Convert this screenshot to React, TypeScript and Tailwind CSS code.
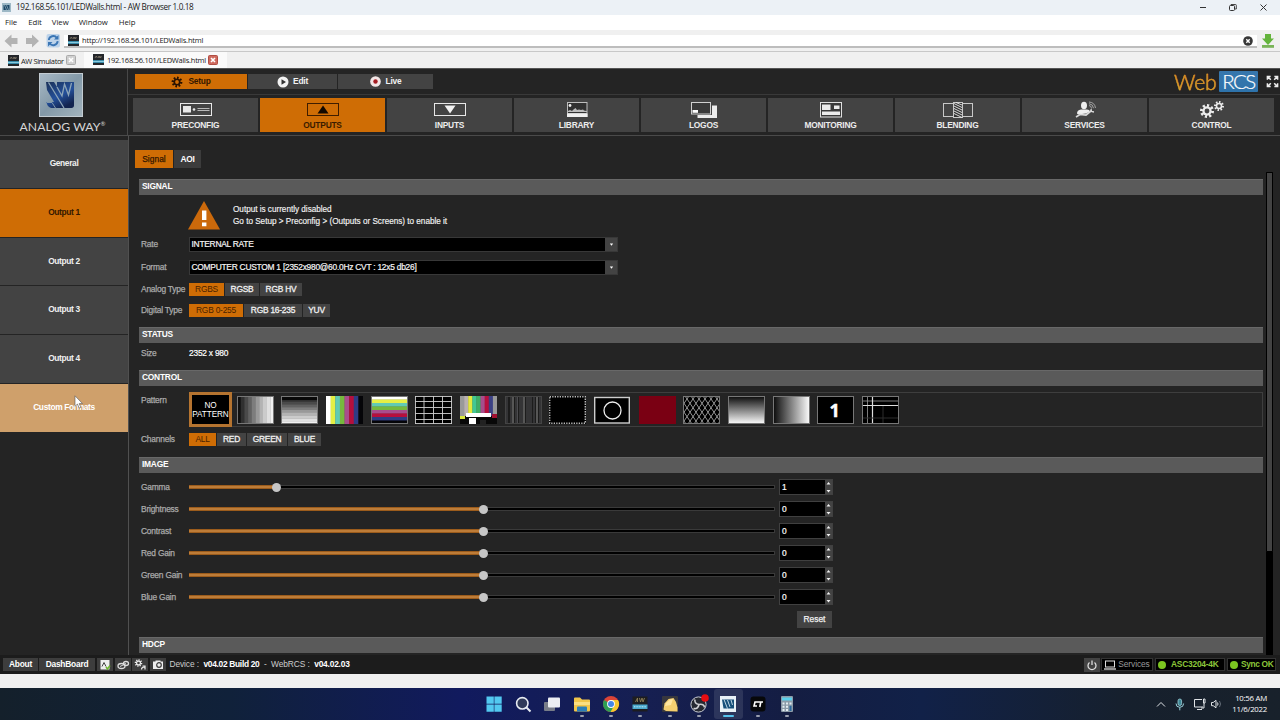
import type { ReactNode } from 'react'
import clsx from 'clsx'

const sidebarItems = ['General', 'Output 1', 'Output 2', 'Output 3', 'Output 4', 'Custom Formats']

const sliders = [
  { label: 'Gamma', value: '1', fill: 87 },
  { label: 'Brightness', value: '0', fill: 294 },
  { label: 'Contrast', value: '0', fill: 294 },
  { label: 'Red Gain', value: '0', fill: 294 },
  { label: 'Green Gain', value: '0', fill: 294 },
  { label: 'Blue Gain', value: '0', fill: 294 },
]

function Gear({ cx, cy, r, color, hole }: { cx: number; cy: number; r: number; color: string; hole: string }) {
  return (
    <g>
      <circle cx={cx} cy={cy} r={r} fill="none" stroke={color} strokeWidth={r * 0.7} pathLength={16} strokeDasharray="1 1" />
      <circle cx={cx} cy={cy} r={r * 0.9} fill={color} />
      <circle cx={cx} cy={cy} r={r * 0.47} fill={hole} />
    </g>
  )
}

function AwIcon({ className }: { className?: string }) {
  return (
    <svg viewBox="0 0 11 11" className={clsx('h-[11px] w-[11px] shrink-0', className)}>
      <rect width="11" height="11" fill="#24262a" />
      <path d="M2 4 3.2 2 4.4 4M5.2 2l.8 2 .8-2 .8 2 .8-2" stroke="#8d8372" strokeWidth=".7" fill="none" />
      <rect y="6.2" width="11" height="2.6" fill="#3fa3c7" />
      <rect y="7.2" width="11" height=".7" fill="#a8dbe9" />
    </svg>
  )
}

function CloseBox({ active }: { active?: boolean }) {
  return (
    <svg viewBox="0 0 10 10" className="h-[10px] w-[10px] shrink-0">
      <rect x=".5" y=".5" width="9" height="9" rx="1" fill={active ? '#cf6a5e' : '#cfcfcf'} stroke={active ? '#b04d43' : '#aaa'} />
      <path d="M3 3l4 4M7 3l-4 4" stroke="#fff" strokeWidth="1.6" />
    </svg>
  )
}

function BrowserChrome() {
  return (
    <div className="bg-[#f0f0f0] font-['Open_Sans',sans-serif] text-[8px] leading-none text-[#202020]">
      <div className="flex h-[15px] items-center bg-[#ecf1f6] pr-[12px] pl-[2px]">
        <svg viewBox="0 0 9 9" className="h-[9px] w-[9px]">
          <rect width="9" height="9" fill="#9db8c6" />
          <path d="M1.5 2h6v5h-6z" fill="#1c4868" />
          <path d="M2.5 2l2 5M4.5 2l2 5" stroke="#9db8c6" strokeWidth=".7" />
        </svg>
        <span className="ml-[5px] text-[8.2px] tracking-[-0.350px]">192.168.56.101/LEDWalls.html - AW Browser 1.0.18</span>
        <svg viewBox="0 0 70 10" className="ml-auto h-[10px] w-[70px]" fill="none" stroke="#333" strokeWidth="1">
          <path d="M2 4.500h6M62.500 1.500l6 6M68.500 1.500l-6 6" />
          <rect x="31.500" y="2.500" width="5" height="5" rx="1" />
          <path d="M33 2V1.500h4.500a.8.8 0 0 1 .8.8V6H37" strokeWidth=".9" />
        </svg>
      </div>
      <div className="flex h-[15px] items-center gap-[10px] bg-white pl-[5px] text-[7.800px] tracking-[-0.05px]">
        <span>File</span>
        <span className="ml-[1px]">Edit</span>
        <span>View</span>
        <span>Window</span>
        <span className="ml-[1px]">Help</span>
      </div>
      <div className="flex h-[22px] items-center border-b border-[#c8c8c8] pr-[6px] pl-[4px]">
        <svg viewBox="0 0 58 16" className="h-[16px] w-[58px] shrink-0">
          <path d="M.5 8l7-6.500v3.500H13.500v6H7.500v3.500zM35 8l-7-6.500v3.500h-6v6h6v3.500z" fill="#b3b3b3" />
          <rect x="42.500" y="1" width="13.500" height="13.500" rx="2" fill="#bdd3ea" />
          <path d="M44.800 7a4.500 4.500 0 0 1 8-2.200M53.700 8.200a4.500 4.500 0 0 1-8 2.300" stroke="#3b76b5" strokeWidth="1.900" fill="none" />
          <path d="M54.500 2v4.500H50zM44 13.500V9h4.500z" fill="#3b76b5" />
        </svg>
        <div className="mt-[2px] ml-[2px] flex h-[13px] flex-1 items-center border-b-2 border-[#bdbdbd] bg-white pr-[4px] pl-[4px]">
          <AwIcon />
          <span className="ml-[3px] pt-px text-[7.500px] tracking-[-0.19px]">http://192.168.56.101/LEDWalls.html</span>
          <svg viewBox="0 0 10 10" className="ml-auto h-[10px] w-[10px]">
            <circle cx="5" cy="5" r="4.800" fill="#383838" />
            <path d="M3.300 3.300l3.400 3.400M6.700 3.300L3.300 6.700" stroke="#fff" strokeWidth="1.400" />
          </svg>
        </div>
        <svg viewBox="0 0 12 14" className="ml-[5px] h-[14px] w-[12px]">
          <path d="M3 0h6v4.500h3L6 11 0 4.500h3z" fill="#64b43c" />
          <path d="M0 11h12v2.800H0z" fill="#79b458" />
        </svg>
      </div>
      <div className="flex h-[16px] items-center text-[7.500px]">
        <div className="flex h-full w-[84px] items-center pl-[8px]">
          <AwIcon />
          <span className="w-[47px] pt-[3px] pl-[2px] tracking-[-0.4px] whitespace-nowrap">AW Simulator</span>
          <CloseBox />
        </div>
        <div className="flex h-full w-[143px] items-center bg-[#fafafa] pl-[9px]">
          <AwIcon className="-mt-[2px]" />
          <span className="w-[104px] pt-[2px] pl-[3px] tracking-[-0.25px] whitespace-nowrap">192.168.56.101/LEDWalls.html</span>
          <CloseBox active />
        </div>
      </div>
    </div>
  )
}

function AnalogWayLogo() {
  return (
    <div className="flex w-[128px] shrink-0 flex-col items-center border-r border-[#484848] pt-[4px] pr-[6px]">
      <svg viewBox="0 0 44 44" className="h-[44px] w-[44px]">
        <defs>
          <linearGradient id="metal" x1="0" y1="0" x2="1" y2="1">
            <stop offset="0" stopColor="#a9bac6" />
            <stop offset=".5" stopColor="#8399a8" />
            <stop offset="1" stopColor="#a3b4bd" />
          </linearGradient>
          <linearGradient id="navy" x1="0" y1="0" x2="0.6" y2="1">
            <stop offset="0" stopColor="#1b3158" />
            <stop offset=".6" stopColor="#24509a" />
            <stop offset="1" stopColor="#12244f" />
          </linearGradient>
        </defs>
        <rect x=".5" y=".5" width="43" height="43" fill="url(#metal)" stroke="#c3ccd2" />
        <path d="M7 9h8l3 5V9h17v23.500c0 1.500-1 2.500-2.500 2.500H12c-3-1-4-3-4.500-6H15L8 17z" fill="url(#navy)" />
        <path d="M9.500 9.500L25 35M18 14l5 9 2.500-12 4 11 3-12" fill="none" stroke="#8da5b8" strokeWidth="1.300" />
        <path d="M8 29.500h5l3.500 5.500" fill="none" stroke="#8299ad" strokeWidth="1" />
      </svg>
      <div className="mt-[4px] ml-[4px] flex font-['Lato',sans-serif] text-[12.200px] leading-[11px] tracking-[0.05px] whitespace-nowrap text-[#d6d6d6]">
        ANALOG WAY<span className="text-[6px] leading-[6px]">®</span>
      </div>
    </div>
  )
}

const navItems: { label: string; icon: ReactNode }[] = [
  {
    label: 'PRECONFIG',
    icon: (
      <g>
        <rect x="4.500" y="2.500" width="31" height="12" fill="none" stroke="#e8e8e8" />
        <rect x="7" y="5" width="8" height="6.500" fill="#e8e8e8" />
        <circle cx="18" cy="8.500" r="1.300" fill="#e8e8e8" />
        <path d="M21.500 7.500h12M21.500 9.500h12" stroke="#b8b8b8" />
      </g>
    ),
  },
  {
    label: 'OUTPUTS',
    icon: (
      <g>
        <rect x="4.500" y="2.500" width="31" height="12" fill="none" stroke="#3f1d00" />
        <path d="M14.500 12.500L20 4.500l5.500 8z" fill="#120800" />
      </g>
    ),
  },
  {
    label: 'INPUTS',
    icon: (
      <g>
        <rect x="4.500" y="2.500" width="31" height="12" fill="none" stroke="#e8e8e8" />
        <path d="M14.500 4.500h11l-5.500 8z" fill="#f2f2f2" />
      </g>
    ),
  },
  {
    label: 'LIBRARY',
    icon: (
      <g>
        <rect x="10" y="1" width="20.500" height="15" fill="#bdbdbd" />
        <path d="M11 2h18.500v8L27 9.500l-1-1-2 .5L22 8.500l-2 .5-1.500-2-2 1.500L15 10l-2-1-2 1z" fill="#303030" />
        <path d="M11 11h18.500v1H11z" fill="#333" />
        <path d="M10 12.500h20.500V16H10z" fill="#f0f0f0" />
        <circle cx="13" cy="4.500" r="1.400" fill="#eee" />
      </g>
    ),
  },
  {
    label: 'LOGOS',
    icon: (
      <g>
        <path d="M13.500 4.500H33V17H13.500z" fill="#ececec" />
        <path d="M6 0h22v14H6z" fill="#434343" />
        <rect x="7.500" y="1.500" width="19" height="11.500" fill="#3a3a3a" stroke="#d0d0d0" />
        <path d="M8.500 9H14v2.800H8.500z" fill="#fff" />
      </g>
    ),
  },
  {
    label: 'MONITORING',
    icon: (
      <g>
        <rect x="9.500" y="1.500" width="21" height="14.500" fill="#3a3a3a" stroke="#e0e0e0" />
        <path d="M11 3.500h8.500v5.500H11zM23 4.500h5.500V8H23zM11 10.500h18v3.500H11z" fill="#ececec" />
      </g>
    ),
  },
  {
    label: 'BLENDING',
    icon: (
      <g>
        <rect x="5.500" y="2.500" width="29" height="13" fill="#444" stroke="#c8c8c8" />
        <rect x="15.500" y="1.500" width="9" height="15" fill="#333" stroke="#c8c8c8" />
        <path d="M16 2.500l8 4M16 5l8 4M16 7.500l8 4M16 10l8 4M16 12.500l8 4M18 1.500l6 2.500" stroke="#eee" strokeWidth=".9" />
      </g>
    ),
  },
  {
    label: 'SERVICES',
    icon: (
      <g>
        <ellipse cx="19" cy="4.500" rx="3" ry="3.800" fill="#eee" />
        <path d="M12 12.500q0-3.500 4-4h6q2.500 0 3 2l-4 2-8 1z" fill="#eee" />
        <path d="M11 16l4-2.500 6 .500 5.500-4.500" fill="none" stroke="#d8d8d8" strokeWidth="1.700" />
        <path d="M26 8l.5 2.500 2.500.5" fill="none" stroke="#d8d8d8" strokeWidth="1.300" />
        <path d="M24 4.500a3 3 0 0 1 2.500 3M24 2.700a5 5 0 0 1 4.500 4.500M24 1a7 7 0 0 1 6.500 6" fill="none" stroke="#bbb" strokeWidth=".8" />
      </g>
    ),
  },
  {
    label: 'CONTROL',
    icon: (
      <g>
        <Gear cx={15} cy={10} r={5.2} color="#ececec" hole="#444" />
        <Gear cx={27} cy={5} r={3.700} color="#ececec" hole="#444" />
      </g>
    ),
  },
]

function Header() {
  return (
    <header className="flex h-[68px] border-t border-b border-t-[#555] border-b-[#4a4a4a] bg-[#242424]">
      <AnalogWayLogo />
      <div className="flex flex-1 flex-col">
        <div className="flex h-[26px] items-center border-b border-[#393939] pl-[7px]">
          <div className="flex h-[15px] items-stretch gap-px text-[8.400px] font-bold text-[#f2f2f2]">
            <div className="flex w-[112px] items-center justify-center gap-[5px] bg-[#cf6d05] text-[#331700]">
              <svg viewBox="0 0 12 12" className="h-[12px] w-[12px]">
                <Gear cx={6} cy={6} r={4} color="#281200" hole="#cf6d05" />
              </svg>
              Setup
            </div>
            <div className="flex w-[89px] items-center justify-center gap-[4px] bg-[#434343]">
              <svg viewBox="0 0 12 12" className="h-[12px] w-[12px]">
                <circle cx="6" cy="6" r="5.500" fill="#f2f2f2" />
                <path d="M4.500 3.200L9 6 4.500 8.800z" fill="#333" />
              </svg>
              Edit
            </div>
            <div className="flex w-[95px] items-center justify-center gap-[5px] bg-[#434343]">
              <svg viewBox="0 0 12 12" className="h-[11px] w-[11px]">
                <circle cx="6" cy="6" r="5.800" fill="#f2e6e6" />
                <circle cx="6" cy="6" r="2.400" fill="#a51c22" />
              </svg>
              Live
            </div>
          </div>
          <div className="ml-auto flex items-center">
            <span className="bg-gradient-to-b from-[#d97a1c] to-[#e0b030] bg-clip-text font-['Lato',sans-serif] text-[21px] leading-[24px] font-light tracking-[-0.1px] text-transparent [-webkit-text-stroke:0.4px_#d8952a]">
              Web
            </span>
            <span className="ml-[2.500px] flex h-[21px] w-[39px] items-center justify-center rounded-[1px] bg-gradient-to-b from-[#3777ad] to-[#2e73ab] font-['Lato',sans-serif] text-[20.500px] font-light tracking-[-1.600px] text-white [-webkit-text-stroke:0.2px_#fff]">
              RCS
            </span>
            <svg viewBox="0 0 14 14" className="mr-[1.500px] ml-[7.500px] h-[13px] w-[13px]" fill="none" stroke="#eee" strokeWidth="1.600">
              <path d="M1.500 5V1.500H5M1.500 1.500l3.700 3.700M9 1.500h3.500V5M12.500 1.500L8.800 5.200M1.500 9v3.500H5M1.500 12.500l3.700-3.700M12.500 9v3.500H9M12.500 12.500L8.800 8.800" />
            </svg>
          </div>
        </div>
        <nav className="flex gap-[2px] pt-[3px] pl-[5px]">
          {navItems.map((item) => (
            <div
              key={item.label}
              className={clsx(
                'flex h-[34px] w-[125px] flex-col items-center pt-[3px] text-[8.400px] leading-[10px] font-bold',
                item.label === 'OUTPUTS' ? 'bg-[#cf6d05] text-[#3b1c00]' : 'bg-[#434343] text-[#ececec]',
              )}
            >
              <svg viewBox="0 0 40 18" className="h-[18px] w-[40px]">
                {item.icon}
              </svg>
              <span className="mt-[1px]">{item.label}</span>
            </div>
          ))}
        </nav>
      </div>
    </header>
  )
}

function Sidebar() {
  return (
    <aside className="flex w-[129px] shrink-0 flex-col gap-px border-r border-[#505050] pt-[4px] text-[8.400px] font-bold tracking-[-0.350px]">
      {sidebarItems.map((item) => (
        <div
          key={item}
          className={clsx(
            'flex h-[47.750px] items-center justify-center pb-px',
            item === 'Output 1' && 'bg-[#cf6d05] text-[#341800]',
            item === 'Custom Formats' && 'bg-[#cfa06b] text-white',
            item !== 'Output 1' && item !== 'Custom Formats' && 'bg-[#434343] text-[#f0f0f0]',
          )}
        >
          {item}
        </div>
      ))}
      <svg viewBox="0 0 10 15" className="absolute top-[395px] left-[74px] h-[15px] w-[10px]">
        <path d="M1 .8v10.500l2.500-2.200 1.700 4 1.700-.8-1.700-3.700h3.300z" fill="#fff" stroke="#555" strokeWidth=".6" />
      </svg>
    </aside>
  )
}

function SectionHeader({ children }: { children: ReactNode }) {
  return (
    <h3 className="flex h-[16px] w-[1124px] items-center border-t border-[#686868] bg-[#5a5a5a] pb-[3px] pl-[3px] text-[8.400px] font-bold text-white">
      {children}
    </h3>
  )
}

function Row({ label, className, children }: { label: string; className?: string; children: ReactNode }) {
  return (
    <div className={clsx('flex items-center', className)}>
      <span className="w-[50px] shrink-0 pl-[2px] text-[8.400px] tracking-[-0.2px] whitespace-nowrap text-[#aaa] [-webkit-text-stroke:0.250px_#aaa]">
        {label}
      </span>
      {children}
    </div>
  )
}

function ButtonGroup({ options }: { options: { label: string; width: number }[] }) {
  return (
    <div className="flex h-[13px] gap-px text-[8.400px]">
      {options.map((option, i) => (
        <span
          key={option.label}
          style={{ width: option.width }}
          className={clsx(
            'flex items-center justify-center whitespace-nowrap',
            i === 0 ? 'bg-[#cf6d05] text-[#4a2300]' : 'bg-[#434343] text-[#f0f0f0] [-webkit-text-stroke:0.3px_#f0f0f0]',
          )}
        >
          {option.label}
        </span>
      ))}
    </div>
  )
}

function Select({ value }: { value: string }) {
  return (
    <div className="flex h-[15px] w-[429px] border border-[#383838] bg-black text-[8.400px] text-[#f4f4f4] [-webkit-text-stroke:0.2px_#f4f4f4]">
      <span className="flex flex-1 items-center pl-[1.500px] tracking-[-0.240px]">{value}</span>
      <span className="flex w-[12px] items-center justify-center bg-[#434343]">
        <svg viewBox="0 0 6 4" className="h-[3px] w-[5px]">
          <path d="M.8.5h4.400L3 3.500z" fill="#fff" />
        </svg>
      </span>
    </div>
  )
}

function Bars({ colors, vertical }: { colors: string[]; vertical?: boolean }) {
  return (
    <g>
      {colors.map((color, i) =>
        vertical ? (
          <rect key={i} x={0} y={(28 / colors.length) * i} width={37} height={28 / colors.length + 0.3} fill={color} />
        ) : (
          <rect key={i} x={(37 / colors.length) * i} y={0} width={37 / colors.length + 0.3} height={28} fill={color} />
        ),
      )}
    </g>
  )
}

const barColors = ['#fff', '#e6ef45', '#62cbb4', '#76b93e', '#a94d8c', '#b60f3d', '#303c84', '#050508']
const grays = ['#101010', '#303030', '#4a4a4a', '#626262', '#7d7d7d', '#999', '#b3b3b3', '#cbcbcb', '#e0e0e0', '#f0f0f0']
const burst = [2, 6, 8, 11, 12.500, 15, 17, 19, 22, 24, 26, 29, 32, 35]
const frame = <rect x=".5" y=".5" width="36" height="27" fill="none" stroke="#777" />

const patterns: ReactNode[] = [
  <g>
    <Bars colors={grays} />
    {frame}
  </g>,
  <g>
    <Bars colors={grays} vertical />
    <rect width="37" height="4" fill="#080808" />
    {frame}
  </g>,
  <Bars colors={barColors} />,
  <g>
    <Bars colors={barColors} vertical />
    {frame}
  </g>,
  <g>
    <rect width="37" height="28" fill="#000" />
    <path d="M.5 0v28M9 0v28M18.500 0v28M27.500 0v28M36.500 0v28M0 .5h37M0 5.500h37M0 11.500h37M0 17.500h37M0 23.500h37M0 27.500h37" stroke="#cfcfcf" strokeWidth=".9" />
  </g>,
  <g>
    <Bars colors={['#999', '#b8b0b0', '#e4e83c', '#43c793', '#3fae66', '#a64d8c', '#b60f3d', '#3b4184', '#999']} />
    <rect y="20" width="37" height="8" fill="#080808" />
    <path d="M0 20h5v3H0z" fill="#d9e83c" />
    <path d="M6 17h25v4H6zM9 22h7v6H9z" fill="#fff" />
    <path d="M32 18h5v4h-5z" fill="#a01030" />
    <path d="M20 24h6v4h-6z" fill="#222" />
  </g>,
  <g>
    <rect width="37" height="28" fill="#1c1c1c" />
    {burst.map((x, i) => (
      <path key={x} d={`M${x} 0v28`} stroke={i % 5 === 2 ? '#909090' : '#4c4c50'} strokeWidth="1" />
    ))}
    <rect x=".5" y=".5" width="36" height="27" fill="none" stroke="#444" />
  </g>,
  <g>
    <rect width="37" height="28" fill="#000" />
    <rect x=".7" y=".7" width="35.600" height="26.600" fill="none" stroke="#bbb" strokeWidth="1.400" strokeDasharray="1.300 1.200" />
  </g>,
  <g>
    <rect x=".7" y="1.500" width="34.600" height="25.500" fill="#000" stroke="#ccc" strokeWidth="1.400" />
    <circle cx="18.500" cy="14.500" r="8.500" fill="none" stroke="#eee" strokeWidth="1.300" />
  </g>,
  <rect width="37" height="28" fill="#7a0013" />,
  <g>
    <rect width="37" height="28" fill="#000" />
    {[-28, -22, -16, -10, -4, 2, 8, 14, 20, 26, 32].map((x) => (
      <path key={x} d={`M${x} 0l19 28M${x + 28} 0l-19 28`} stroke="#a5a5a5" strokeWidth=".9" />
    ))}
    {frame}
  </g>,
  <g>
    <rect width="37" height="28" fill="url(#gradV)" />
    {frame}
  </g>,
  <g>
    <rect width="37" height="28" fill="url(#gradH)" />
    {frame}
  </g>,
  <g>
    <rect width="37" height="28" fill="#000" />
    <text x="17.500" y="20.500" textAnchor="middle" fill="#fff" stroke="#fff" strokeWidth=".4" fontSize="18" fontWeight="bold" fontFamily="Open Sans">
      1
    </text>
    {frame}
  </g>,
  <g>
    <rect width="37" height="28" fill="#000" />
    <path d="M5.500 0v28M0 5h37" stroke="#999" strokeWidth=".8" />
    <path d="M10.500 0v28M0 9.500h37" stroke="#ddd" strokeWidth="1.200" />
    <path d="M0 22h37M21 10v18" stroke="#2c2c2c" />
    {frame}
  </g>,
]

function PatternStrip() {
  return (
    <div className="flex h-[35px] w-[1074px] items-center border border-[#3e3e3e]">
      <div className="-ml-px flex h-[35px] w-[43px] shrink-0 flex-col items-center justify-center border-[3px] border-[#b57430] bg-black text-[8.200px] leading-[9px] tracking-[-0.1px] text-white">
        <span>NO</span>
        <span>PATTERN</span>
      </div>
      <svg className="absolute h-0 w-0">
        <defs>
          <linearGradient id="gradV" x1="0" y1="0" x2="0" y2="1">
            <stop offset="0" stopColor="#080808" />
            <stop offset="1" stopColor="#fff" />
          </linearGradient>
          <linearGradient id="gradH">
            <stop offset="0" stopColor="#080808" />
            <stop offset="1" stopColor="#fff" />
          </linearGradient>
        </defs>
      </svg>
      <div className="ml-[4.500px] flex gap-[7.700px]">
        {patterns.map((pattern, i) => (
          <svg key={i} viewBox="0 0 37 28" className="h-[28px] w-[37px] shrink-0">
            {pattern}
          </svg>
        ))}
      </div>
    </div>
  )
}

function Slider({ label, value, fill }: { label: string; value: string; fill: number }) {
  return (
    <Row label={label} className="h-[22px]">
      <div className="relative flex h-[10px] w-[586px] items-center">
        <div className="h-[4px] w-full border border-[#3a3a3a] bg-black" />
        <div className="absolute left-0 h-[4px] border-y border-[#9c5c1c] bg-[#bd7c38]" style={{ width: fill }} />
        <div className="absolute h-[9px] w-[9px] rounded-full bg-[#c6c6c6]" style={{ left: fill - 4.5 }} />
      </div>
      <div className="ml-[4px] flex h-[16px] w-[54px] border border-[#404040] bg-black">
        <span className="flex flex-1 items-center pl-[2px] text-[8.400px] text-white [-webkit-text-stroke:0.2px_#fff]">{value}</span>
        <svg viewBox="0 0 7 14" className="h-[14px] w-[7px]">
          <rect width="7" height="14" fill="#434343" />
          <path d="M1.500 4.500h4L3.500 2zM1.500 10h4l-2 2.500z" fill="#f0f0f0" />
        </svg>
      </div>
    </Row>
  )
}

function OutputSettings() {
  return (
    <main className="flex flex-1 pt-[14px]">
      <div className="flex h-[505px] w-[1134px] flex-col overflow-hidden pl-[6px]">
        <div className="flex h-[18px] shrink-0 gap-px text-[8.400px]">
          <span className="flex w-[38px] items-center justify-center bg-[#cf6d05] tracking-[0.050px] text-[#331700] [-webkit-text-stroke:0.250px_#331700]">
            Signal
          </span>
          <span className="flex w-[27px] items-center justify-center bg-[#3c3c3c] font-bold text-white">AOI</span>
        </div>
        <div className="mt-[11px] pl-[4px]">
          <SectionHeader>SIGNAL</SectionHeader>
          <div className="mt-[5px] flex h-[31px] items-center pl-[49px]">
            <svg viewBox="0 0 32 29" className="h-[29px] w-[32px]">
              <path d="M16 0l16 28.500H0z" fill="#cb690b" />
              <path d="M14 9.500h4.400v9.500H14zM14 21.500h4.400v3.700H14z" fill="#fff" />
            </svg>
            <p className="ml-[13px] text-[8.200px] leading-[12px] tracking-[-0.020px] text-[#f2f2f2] [-webkit-text-stroke:0.150px_#f2f2f2]">
              Output is currently disabled
              <br />
              Go to Setup &gt; Preconfig &gt; (Outputs or Screens) to enable it
            </p>
          </div>
          <Row label="Rate" className="mt-[6px] h-[15px]">
            <Select value="INTERNAL RATE" />
          </Row>
          <Row label="Format" className="mt-[8px] h-[15px]">
            <Select value="COMPUTER CUSTOM 1 [2352x980@60.0Hz CVT : 12x5 db26]" />
          </Row>
          <Row label="Analog Type" className="mt-[8px]">
            <ButtonGroup options={[{ label: 'RGBS', width: 35 }, { label: 'RGSB', width: 34 }, { label: 'RGB HV', width: 42 }]} />
          </Row>
          <Row label="Digital Type" className="mt-[8px]">
            <ButtonGroup options={[{ label: 'RGB 0-255', width: 54 }, { label: 'RGB 16-235', width: 58 }, { label: 'YUV', width: 27 }]} />
          </Row>
          <div className="mt-[10px]">
            <SectionHeader>STATUS</SectionHeader>
          </div>
          <Row label="Size" className="mt-[3px] h-[14px]">
            <span className="text-[8.400px] text-white [-webkit-text-stroke:0.2px_#fff]">2352 x 980</span>
          </Row>
          <div className="mt-[10px]">
            <SectionHeader>CONTROL</SectionHeader>
          </div>
          <div className="mt-[6px] flex h-[35px]">
            <Row label="Pattern" className="h-[16px]">
              <span />
            </Row>
            <PatternStrip />
          </div>
          <Row label="Channels" className="mt-[6px]">
            <ButtonGroup
              options={[
                { label: 'ALL', width: 27 },
                { label: 'RED', width: 29 },
                { label: 'GREEN', width: 40 },
                { label: 'BLUE', width: 33 },
              ]}
            />
          </Row>
          <div className="mt-[11px] mb-[3px]">
            <SectionHeader>IMAGE</SectionHeader>
          </div>
          {sliders.map((slider) => (
            <Slider key={slider.label} {...slider} />
          ))}
          <div className="mt-[3px] ml-[658px] flex h-[17px] w-[35px] items-center justify-center bg-[#434343] text-[8.400px] tracking-normal text-[#f2f2f2] [-webkit-text-stroke:0.250px_#f2f2f2]">
            Reset
          </div>
          <div className="mt-[9px]">
            <SectionHeader>HDCP</SectionHeader>
          </div>
        </div>
      </div>
      <div className="mt-[22px] ml-[3px] h-[483px] w-[7px] bg-black">
        <div className="h-[380px] rounded-[1px] border border-black bg-[#434343]" />
      </div>
    </main>
  )
}

function FooterIcon({ children, className }: { children: ReactNode; className?: string }) {
  return (
    <svg viewBox="0 0 16 13" className={clsx('h-[13px] bg-[#3d3d3d]', className)}>
      {children}
    </svg>
  )
}

function StatusBar() {
  return (
    <footer className="flex h-[19px] items-center bg-[#1c1c1c] pr-[4px] pl-[3px] text-[8.400px] text-white">
      <span className="flex h-[13px] w-[35px] items-center justify-center bg-[#3d3d3d] font-bold">About</span>
      <span className="ml-px flex h-[13px] w-[56px] items-center justify-center bg-[#3d3d3d] font-bold">DashBoard</span>
      <div className="ml-[2px] flex gap-[1.500px]">
        <FooterIcon className="w-[16px]">
          <rect x="3.500" y="2" width="9" height="9.500" fill="#eee" />
          <path d="M5 8.500l2-4 2 4" stroke="#444" fill="none" />
          <path d="M9 9l1.500 2L13 7.500" stroke="#6bb52c" strokeWidth="1.500" fill="none" />
        </FooterIcon>
        <FooterIcon className="w-[16px]">
          <ellipse cx="6.500" cy="8" rx="3.500" ry="2.500" fill="none" stroke="#ddd" strokeWidth="1.300" />
          <ellipse cx="11" cy="5.500" rx="2.500" ry="2" fill="none" stroke="#ddd" strokeWidth="1.300" />
          <path d="M5 8.500l6-3" stroke="#ddd" />
        </FooterIcon>
        <FooterIcon className="w-[16px]">
          <Gear cx={6.500} cy={5} r={2.800} color="#eee" hole="#3d3d3d" />
          <path d="M9.500 11.500q0-2.500 3-2.500M10.500 8h2.500v3.500" fill="none" stroke="#eee" strokeWidth="1.200" />
        </FooterIcon>
        <FooterIcon className="w-[16px]">
          <path d="M3 3.500h2.500V2.500h5v1H13V11H3z" fill="#eee" />
          <circle cx="9" cy="7" r="2.300" fill="none" stroke="#3d3d3d" strokeWidth="1.200" />
        </FooterIcon>
      </div>
      <p className="ml-[4px] flex gap-[4.500px] whitespace-pre text-[#ccc]">
        <span className="tracking-[-0.1px]">Device :</span>
        <b className="tracking-[-0.3px] text-white">v04.02 Build 20</b>
        <span>-</span>
        <span className="tracking-[-0.1px]">WebRCS :</span>
        <b className="tracking-[-0.2px] text-white">v04.02.03</b>
      </p>
      <div className="ml-auto flex items-center font-bold text-[#8cc63a]">
        <svg viewBox="0 0 16 14" className="h-[14px] w-[16px] bg-[#434343]" fill="none" stroke="#ddd" strokeWidth="1.300">
          <path d="M5.500 4.500a4 4 0 1 0 5 0M8 2.500V7" />
        </svg>
        <div className="ml-px flex h-[13px] w-[52px] items-center justify-center gap-[2px] border border-[#333] bg-black font-normal text-[#999]">
          <svg viewBox="0 0 12 10" className="h-[10px] w-[12px]" fill="none" stroke="#ddd">
            <rect x="1.500" y="1" width="9" height="6" />
            <path d="M0 9h12" strokeWidth="1.300" />
          </svg>
          <span className="tracking-[-0.1px]">Services</span>
        </div>
        <div className="ml-[2px] flex h-[13px] w-[70px] items-center gap-[5px] border border-[#333] bg-black pl-[2px]">
          <i className="h-[8px] w-[8px] rounded-full bg-[#7cc520]" />
          ASC3204-4K
        </div>
        <div className="ml-[2px] flex h-[13px] w-[49px] items-center gap-[3px] border border-[#333] bg-black pl-[2px] tracking-[-0.350px] whitespace-nowrap">
          <i className="h-[8px] w-[8px] shrink-0 rounded-full bg-[#7cc520]" />
          Sync OK
        </div>
      </div>
    </footer>
  )
}

const taskbarIcons: ReactNode[] = [
  <path d="M2.500 2.500h7.300v7.300H2.500zM10.400 2.500h7.300v7.300h-7.300zM2.500 10.400h7.300v7.300H2.500zM10.400 10.400h7.300v7.300h-7.300z" fill="#52c8f0" />,
  <g fill="none" stroke="#e8ecf2">
    <circle cx="9.300" cy="9.300" r="5.700" strokeWidth="1.600" fill="#303a5a" />
    <path d="M13.500 13.500l4 4" strokeWidth="2" />
  </g>,
  <g>
    <rect x="2" y="8" width="11" height="9" rx="1" fill="#777c88" />
    <rect x="6" y="3.500" width="12" height="10" rx="1" fill="#eceef2" />
  </g>,
  <g>
    <path d="M2 4.500q0-1 1-1h5l2 2h7q1 0 1 1v10q0 1-1 1H3q-1 0-1-1z" fill="#f2c64a" />
    <path d="M2 8h16v3H2z" fill="#fbdf82" />
    <path d="M5 13.500q0-1 1-1h8q1 0 1 1v4H5z" fill="#2d7fb8" />
  </g>,
  <g>
    <circle cx="10" cy="10" r="8" fill="#dc4437" />
    <path d="M10 10L3 6.100A8 8 0 0 0 10 18l3.500-6z" fill="#2e9e54" />
    <path d="M10 10h4l-4.500 8A8 8 0 0 0 17 6h-7z" fill="#f6c831" />
    <circle cx="10" cy="10" r="3.900" fill="#fff" />
    <circle cx="10" cy="10" r="3" fill="#4687e8" />
  </g>,
  <g>
    <rect x="2.500" y="2.500" width="15" height="15" fill="#1d1d20" />
    <path d="M5.500 8L7.500 4v4M9.500 4l1 4 1.500-4 1 4 1.500-4" fill="none" stroke="#8f8057" strokeWidth=".9" />
    <rect x="2.500" y="10.500" width="15" height="4.500" fill="#4aa9cf" />
    <path d="M4 12.800h12" stroke="#c2e9f2" strokeDasharray="1 .6" />
  </g>,
  <g>
    <rect x="2" y="2" width="16" height="16" rx="1" fill="#37373e" />
    <path d="M3.500 15.500l1-6 4-4.500 5-1 2.500 4 1.500 5.500v4L6 17z" fill="#f4cf70" />
    <path d="M5 12l1-3 4-3.500 3-.5-2 6z" fill="#ffe6a0" />
  </g>,
  <g>
    <circle cx="9.500" cy="10.500" r="7.600" fill="#262932" stroke="#c9ccd2" strokeWidth="1" />
    <path d="M10 10.500q-5-1-4-5M10 10.500q5-1 5.500 3M10 10.500q-1 5-5.500 4" fill="none" stroke="#d0d0d4" strokeWidth="1.600" />
    <circle cx="16" cy="4" r="3.800" fill="#e80d12" />
  </g>,
  <g>
    <rect x="2" y="2" width="16" height="16" fill="#e8f1f6" />
    <path d="M4 5.500h12v9H5.500zM4 14h3" fill="#164f79" />
    <path d="M6 5.500l3.500 9M9.500 6l2.500 7M13 6l1.500 5" stroke="#cfe3ee" strokeWidth=".9" />
  </g>,
  <g>
    <rect x="2.500" y="2.500" width="15" height="15" rx="3" fill="#07080a" />
    <path d="M10 8H7L6 12h3M10 8h5M12.800 8l-1 5" fill="none" stroke="#fff" strokeWidth="1.600" />
  </g>,
  <g>
    <rect x="4" y="2" width="12" height="16" rx="1" fill="#8c9ba8" />
    <rect x="5" y="3.500" width="10" height="3" fill="#5bd0ec" />
    <path d="M5.500 8.500h2v2h-2zM9 8.500h2v2H9zM5.500 11.800h2v2h-2zM9 11.800h2v2H9zM5.500 15h2v2h-2zM9 15h2v2H9zM12.500 8.500h2v2h-2z" fill="#e4edf2" />
    <path d="M12.500 11.800h2V17h-2z" fill="#28669c" />
  </g>,
]

function Taskbar() {
  return (
    <div className="flex h-[32px] items-center bg-[linear-gradient(90deg,#14202b_0%,#10213a_18%,#111a5e_36%,#161f52_50%,#141d42_62%,#112148_72%,#16202d_88%,#18212b_100%)] tracking-normal">
      <div className="ml-[479px] flex">
        {taskbarIcons.map((icon, i) => (
          <div key={i} className={clsx('flex h-[30px] w-[29.350px] flex-col items-center rounded-[3px] pt-[5px]', i === 8 && 'bg-white/10')}>
            <svg viewBox="0 0 20 20" className="h-[20px] w-[20px]">
              {icon}
            </svg>
            {i > 2 && <div className={clsx('mt-px h-[2px] rounded-full', i === 8 ? 'w-[11px] bg-[#55c3ee]' : 'w-[4px] bg-[#9a9faf]')} />}
          </div>
        ))}
      </div>
      <div className="mr-[13px] ml-auto flex items-center gap-[9px]">
        <svg viewBox="0 0 68 14" className="h-[14px] w-[68px]" fill="none" stroke="#dfe3e6">
          <path d="M2 9.500l4-4 4 4" />
          <rect x="23" y="2" width="3.600" height="6.500" rx="1.800" fill="#3f8795" stroke="#9cd2dc" strokeWidth=".8" />
          <path d="M21 6.500a3.800 3.800 0 0 0 7.600 0M24.800 10.300v3" stroke="#9cd2dc" />
          <path d="M47 2.500h-7.500v7.500H48M42 12.500h5M48.500 2h1.500v4h-1.500zM49 6v5h-3" />
          <path d="M56.500 5.500h1.700L61 3.300v7.500L58.200 8.700h-1.700z" />
          <path d="M62.500 5.500q1 1.500 0 3" />
          <path d="M64.500 4q2 3 0 6" stroke="#666f7a" />
        </svg>
        <div className="pb-px text-right font-['Open_Sans',sans-serif] text-[7.800px] leading-[10.500px] tracking-[-0.250px] text-white">
          <div>10:56 AM</div>
          <div>11/6/2022</div>
        </div>
      </div>
    </div>
  )
}

export default function App() {
  return (
    <div className="relative flex h-[720px] w-[1280px] flex-col overflow-hidden bg-[#f0f0f0] font-['Liberation_Sans',Arial,sans-serif] leading-none tracking-[-0.220px]">
      <BrowserChrome />
      <Header />
      <div className="flex h-[519px] overflow-hidden bg-[#242424]">
        <Sidebar />
        <OutputSettings />
      </div>
      <StatusBar />
      <div className="h-[14px] bg-[#f0f0f0]" />
      <Taskbar />
    </div>
  )
}
